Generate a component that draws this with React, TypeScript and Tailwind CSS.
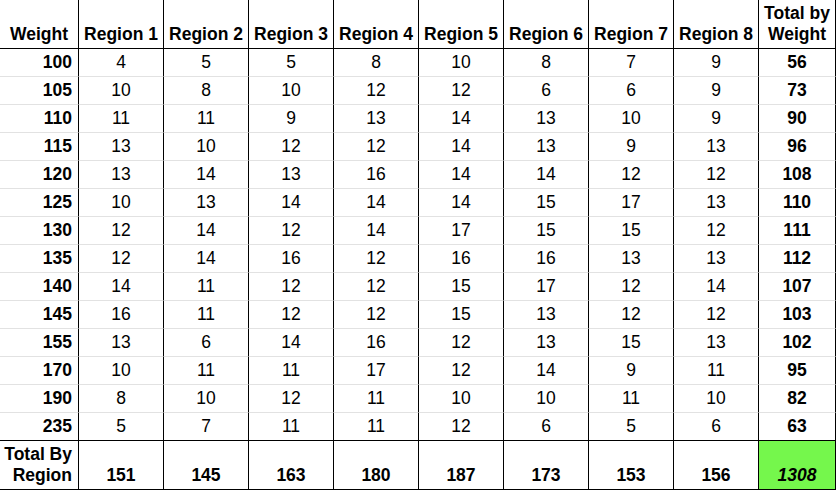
const regions = ['Region 1', 'Region 2', 'Region 3', 'Region 4', 'Region 5', 'Region 6', 'Region 7', 'Region 8'];

const rows: { weight: number; values: number[]; total: number }[] = [
  { weight: 100, values: [4, 5, 5, 8, 10, 8, 7, 9], total: 56 },
  { weight: 105, values: [10, 8, 10, 12, 12, 6, 6, 9], total: 73 },
  { weight: 110, values: [11, 11, 9, 13, 14, 13, 10, 9], total: 90 },
  { weight: 115, values: [13, 10, 12, 12, 14, 13, 9, 13], total: 96 },
  { weight: 120, values: [13, 14, 13, 16, 14, 14, 12, 12], total: 108 },
  { weight: 125, values: [10, 13, 14, 14, 14, 15, 17, 13], total: 110 },
  { weight: 130, values: [12, 14, 12, 14, 17, 15, 15, 12], total: 111 },
  { weight: 135, values: [12, 14, 16, 12, 16, 16, 13, 13], total: 112 },
  { weight: 140, values: [14, 11, 12, 12, 15, 17, 12, 14], total: 107 },
  { weight: 145, values: [16, 11, 12, 12, 15, 13, 12, 12], total: 103 },
  { weight: 155, values: [13, 6, 14, 16, 12, 13, 15, 13], total: 102 },
  { weight: 170, values: [10, 11, 11, 17, 12, 14, 9, 11], total: 95 },
  { weight: 190, values: [8, 10, 12, 11, 10, 10, 11, 10], total: 82 },
  { weight: 235, values: [5, 7, 11, 11, 12, 6, 5, 6], total: 63 },
];

const regionTotals = [151, 145, 163, 180, 187, 173, 153, 156];

export default function App() {
  return (
    <div className="w-[838px] h-[492px] bg-white text-black font-['Liberation_Sans',Arial,sans-serif] text-[17.5px] leading-[21px]">
      <div className="grid w-[836px] grid-cols-[79px_repeat(8,85px)_77px]">
        {/* header */}
        <div className="flex h-[49px] items-end justify-center border-b border-r border-black pb-[3px] font-bold">
          Weight
        </div>
        {regions.map((r) => (
          <div
            key={r}
            className="flex h-[49px] items-end justify-center border-b border-r border-black pb-[3px] font-bold"
          >
            {r}
          </div>
        ))}
        <div className="flex h-[49px] items-end justify-center border-b border-r border-black pb-[3px] text-center font-bold">
          Total by
          <br />
          Weight
        </div>

        {/* data */}
        {rows.map((row, i) => {
          const line = i === rows.length - 1 ? 'border-black' : 'border-b-[#e2e2e2] border-r-black';
          return [
            <div
              key={`w${row.weight}`}
              className={`flex h-[28px] items-center justify-end border-b border-r pr-[6px] font-bold ${line}`}
            >
              {row.weight}
            </div>,
            ...row.values.map((v, j) => (
              <div
                key={`v${row.weight}-${j}`}
                className={`flex h-[28px] items-center justify-center border-b border-r ${line}`}
              >
                {v}
              </div>
            )),
            <div
              key={`t${row.weight}`}
              className={`flex h-[28px] items-center justify-center border-b border-r font-bold ${line}`}
            >
              {row.total}
            </div>,
          ];
        })}

        {/* totals */}
        <div className="flex h-[49px] items-end justify-end border-b border-r border-black pb-[3px] pr-[6px] text-right font-bold">
          Total By
          <br />
          Region
        </div>
        {regionTotals.map((t, j) => (
          <div
            key={`rt${j}`}
            className="flex h-[49px] items-end justify-center border-b border-r border-black pb-[3px] font-bold"
          >
            {t}
          </div>
        ))}
        <div className="flex h-[49px] items-end justify-center border-b border-r border-black bg-[#75f74c] pb-[3px] font-bold italic">
          1308
        </div>
      </div>
    </div>
  );
}
